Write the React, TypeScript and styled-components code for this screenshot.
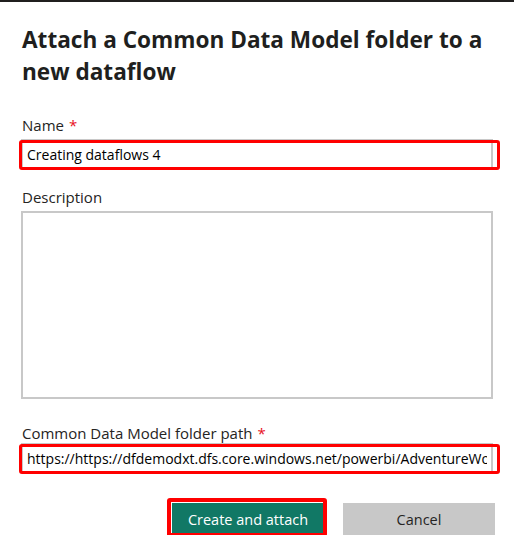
import styled, { createGlobalStyle } from "styled-components";

const GlobalStyle = createGlobalStyle`
  html, body {
    margin: 0;
    padding: 0;
    background: #ffffff;
  }
  body {
    font-family: "Open Sans", "Noto Sans", "Liberation Sans", sans-serif;
    color: #252423;
  }
`;

const TopBar = styled.div`
  height: 2px;
  background: #201f1e;
`;

const Dialog = styled.div`
  padding: 22px 21px 0 21px;
  display: flex;
  flex-direction: column;
`;

const Title = styled.h1`
  margin: 0 0 27px 1px;
  font-size: 22.6px;
  line-height: 32px;
  font-weight: 700;
  color: #201f1e;
`;

const Label = styled.label<{ $tight?: boolean }>`
  display: block;
  margin: 0 0 ${(p) => (p.$tight ? 0 : 4)}px 1px;
  font-size: 15px;
  line-height: 20px;
  color: #252423;
`;

const Required = styled.span`
  color: #e81123;
  margin-left: 5px;
`;

const Field = styled.div<{ $gap: number }>`
  margin-bottom: ${(p) => p.$gap}px;
  position: relative;
`;

const Highlight = styled.div`
  position: absolute;
  left: -2px;
  right: -7px;
  top: 1px;
  bottom: -1px;
  border: 3px solid #ff0000;
  border-radius: 3px;
  pointer-events: none;
`;

const TextInput = styled.input`
  box-sizing: border-box;
  display: block;
  width: 100%;
  height: 30px;
  margin: 0;
  padding: 0 4px;
  border: 2px solid #c8c8c8;
  font-family: inherit;
  font-size: 14px;
  color: #000000;
  background: #fff;
  outline: none;
`;

const TextArea = styled.textarea`
  box-sizing: border-box;
  display: block;
  width: 100%;
  height: 188px;
  margin: 0;
  padding: 4px;
  border: 2px solid #c8c8c8;
  resize: none;
  font-family: inherit;
  font-size: 14px;
  background: #fff;
  outline: none;
`;

const Actions = styled.div`
  display: flex;
  justify-content: flex-end;
  gap: 19px;
  margin: 30px -2px 0 0;
`;

const ButtonWrap = styled.div`
  position: relative;
`;

const ButtonHighlight = styled.div`
  position: absolute;
  left: -5px;
  top: -5px;
  right: -3px;
  bottom: -2px;
  border: 4px solid #ff0000;
  border-radius: 3px;
  pointer-events: none;
`;

const Button = styled.button<{ $primary?: boolean }>`
  display: block;
  width: 152px;
  height: 32px;
  border: none;
  padding: 0;
  font-family: inherit;
  font-size: 14.5px;
  cursor: pointer;
  background: ${(p) => (p.$primary ? "#117865" : "#c8c8c8")};
  color: ${(p) => (p.$primary ? "#ffffff" : "#252423")};
`;

export default function App() {
  return (
    <>
      <GlobalStyle />
      <TopBar />
      <Dialog>
        <Title>Attach a Common Data Model folder to a new dataflow</Title>

        <Label htmlFor="name">
          Name<Required>*</Required>
        </Label>
        <Field $gap={18}>
          <TextInput id="name" defaultValue="Creating dataflows 4" />
          <Highlight />
        </Field>

        <Label htmlFor="description">Description</Label>
        <Field $gap={24}>
          <TextArea id="description" />
        </Field>

        <Label htmlFor="path" $tight>
          Common Data Model folder path<Required>*</Required>
        </Label>
        <Field $gap={0}>
          <TextInput
            id="path"
            defaultValue="https://https://dfdemodxt.dfs.core.windows.net/powerbi/AdventureWorks"
          />
          <Highlight />
        </Field>

        <Actions>
          <ButtonWrap>
            <Button $primary>Create and attach</Button>
            <ButtonHighlight />
          </ButtonWrap>
          <Button>Cancel</Button>
        </Actions>
      </Dialog>
    </>
  );
}
